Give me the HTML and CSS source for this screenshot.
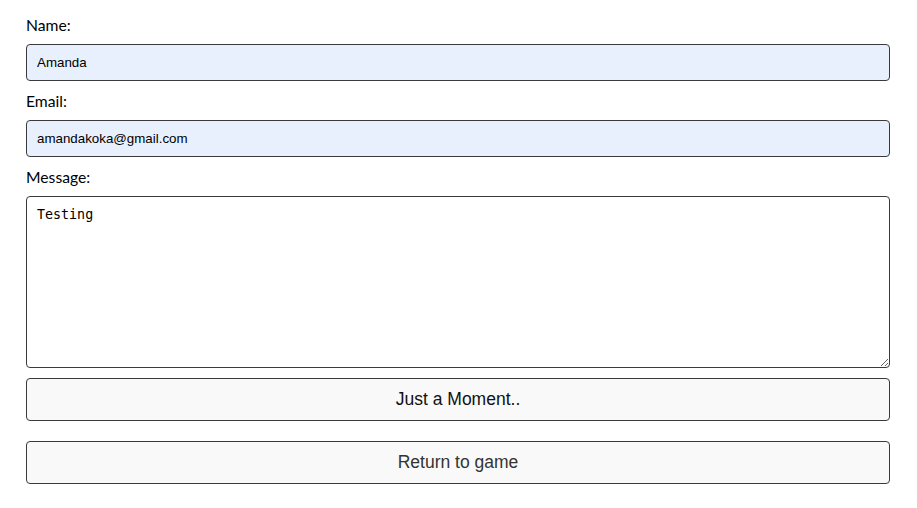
FILE: index.html
```html
<!DOCTYPE html>
<html>
<head>
<meta charset="utf-8">
<link rel="stylesheet" href="styles.css">
</head>
<body>
<form class="form">
  <label class="label" for="name">Name:</label>
  <input class="field filled" id="name" type="text" value="Amanda">
  <label class="label" for="email">Email:</label>
  <input class="field filled" id="email" type="email" value="amandakoka@gmail.com">
  <label class="label" for="msg">Message:</label>
  <textarea class="field area" id="msg">Testing</textarea>
  <button class="btn btn-submit" type="button">Just a Moment..</button>
  <button class="btn btn-return" type="button">Return to game</button>
</form>
</body>
</html>
```
FILE: styles.css
```css
html, body {
  margin: 0;
  padding: 0;
  background: #ffffff;
}

.form {
  display: flex;
  flex-direction: column;
  width: 864px;
  padding: 16px 0 0 26px;
}

.label {
  font-family: Lato, "Open Sans", sans-serif;
  font-size: 15.7px;
  line-height: 18px;
  height: 18px;
  color: #000;
  margin-bottom: 10px;
}

.field {
  box-sizing: border-box;
  width: 864px;
  margin: 0 0 11px 0;
  border: 1px solid #3a3a3a;
  border-radius: 4px;
  outline: none;
}

.filled {
  height: 37px;
  padding: 0 10px;
  background: #e8f0fe;
  font-family: "Liberation Sans", Arial, sans-serif;
  font-size: 13.33px;
  color: #000;
}

.area {
  height: 172px;
  padding: 10px;
  margin-bottom: 10px;
  background: #fff;
  font-family: "DejaVu Sans Mono", monospace;
  font-size: 13.33px;
  line-height: 16px;
  color: #000;
  resize: vertical;
}

.btn {
  box-sizing: border-box;
  width: 864px;
  height: 43px;
  margin: 0;
  padding: 0;
  border: 1px solid #3a3a3a;
  border-radius: 4px;
  background: #f9f9f9;
  font-family: "Liberation Sans", Arial, sans-serif;
  font-size: 17.5px;
  cursor: pointer;
}

.btn-submit {
  color: #111;
  margin-bottom: 20px;
}

.btn-return {
  color: #333;
}
```
